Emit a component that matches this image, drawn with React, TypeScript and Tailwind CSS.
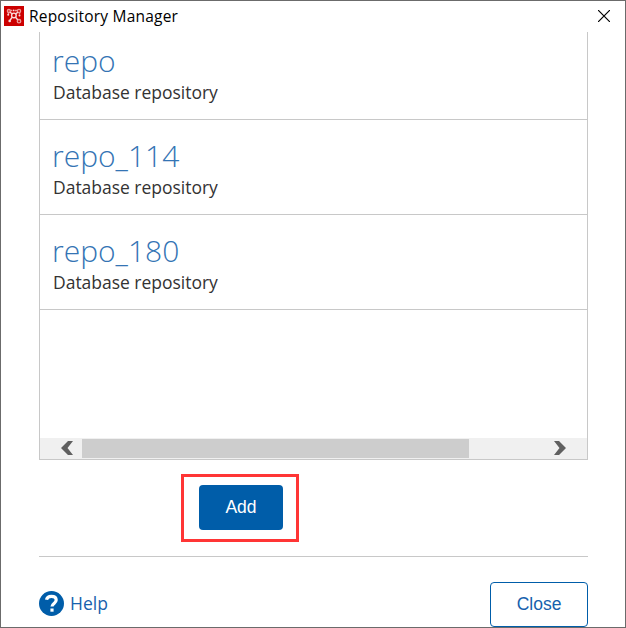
const repositories = ["repo", "repo_114", "repo_180"];

function AppIcon() {
  return (
    <svg width="20" height="20" viewBox="0 0 20 20" className="mb-px shrink-0">
      <rect width="20" height="20" fill="#cc0000" />
      <g fill="none" stroke="#ee9a9a" strokeWidth="1.4">
        <circle cx="4.900" cy="5" r="1.500" />
        <circle cx="15" cy="5" r="1.600" />
        <circle cx="15" cy="15.200" r="1.700" />
        <path d="M6.500 4.500h1.800M11 4.500h2.200M15.500 6.600v2M4.500 6.600v1.600" />
      </g>
      <g fill="none" stroke="#fadcdc" strokeWidth="1.400">
        <circle cx="9.900" cy="9.400" r="2.300" />
        <path d="M6 6.200l2.200 1.600M13.900 6.200l-2.300 1.700M11.500 11.200l2.200 2.500M8.200 11.200l-2 2.800" />
      </g>
      <g fill="#fbdada">
        <circle cx="5.700" cy="14.900" r="1.300" />
        <circle cx="15.500" cy="9.400" r="1" />
        <circle cx="4.200" cy="8.800" r="1" />
        <circle cx="9.700" cy="4.400" r="0.900" />
      </g>
    </svg>
  );
}

function TitleBar() {
  return (
    <header className="flex h-[31px] shrink-0 items-center pl-[3px] pr-[15px]">
      <AppIcon />
      <h1 className="mb-px ml-[5px] grow whitespace-nowrap font-['Open_Sans',sans-serif] text-[15.5px] leading-5 tracking-[0.2px] text-black">
        Repository Manager
      </h1>
      <svg width="12" height="12" viewBox="0 0 12 12" stroke="#000" strokeWidth="1.2" className="mb-px">
        <path d="M0 0L12 12M12 0L0 12" />
      </svg>
    </header>
  );
}

function RepositoryRow({ name }: { name: string }) {
  return (
    <li className="flex h-[95px] flex-col border-b border-[#c8c8c8] pl-[12px] pt-[19px]">
      <span className="text-[30px] font-light leading-[34px] text-[#3474b4]">{name}</span>
      <span className="ml-px mt-[2px] text-[17.5px] leading-[24px] tracking-[-0.02px] text-[#333]">
        Database repository
      </span>
    </li>
  );
}

function ScrollBar() {
  return (
    <div className="flex h-[21px] items-center bg-[#f0f0f0]">
      <svg width="42" height="20" viewBox="0 0 42 20" className="mb-px shrink-0">
        <path d="M28 3h5l-5.500 7 5.500 7h-5l-7-7z" fill="#606060" />
      </svg>
      <div className="h-[19px] w-[387px] bg-[#cdcdcd]" />
      <svg width="118" height="20" viewBox="0 0 118 20" className="mb-px shrink-0">
        <path d="M85 3h5l7 7-7 7h-5l5.500-7z" fill="#606060" />
      </svg>
    </div>
  );
}

export default function App() {
  return (
    <div className="flex h-[628px] w-[626px] flex-col overflow-hidden border border-[#6b6b6b] bg-white font-['Open_Sans',sans-serif]">
      <TitleBar />
      <main className="ml-[38px] flex w-[549px] flex-col">
        <section className="flex h-[428px] flex-col overflow-hidden border-x border-b border-[#c8c8c8]">
          <ul className="-mt-[7px] grow">
            {repositories.map((name) => (
              <RepositoryRow key={name} name={name} />
            ))}
          </ul>
          <ScrollBar />
        </section>
        <div className="ml-[142px] mt-[14px] flex h-[68px] w-[118px] items-center justify-center border-[3px] border-[#ff3535]">
          <button className="mb-px ml-[2px] h-[45px] w-[84px] rounded-[4px] bg-[#005da9] font-['Liberation_Sans',sans-serif] text-[17.5px] text-white">
            Add
          </button>
        </div>
        <hr className="mt-[14px] border-[#c8c8c8]" />
        <footer className="mt-[25px] flex items-start justify-between">
          <a className="mt-[9px] flex items-start gap-[6px] text-[17.5px] leading-[24px] text-[#1761ad]">
            <svg width="25" height="25" viewBox="0 0 25 25">
              <circle cx="12.500" cy="12.500" r="12.500" fill="#005da9" />
              <path d="M7.500 8.800C8 6.200 9.900 5.300 12.400 5.300c3 0 4.800 1.600 4.800 3.800 0 3.300-4.200 3.400-4.200 6.500" fill="none" stroke="#fff" strokeWidth="3.200" />
              <path d="M11.400 17.500h3.200v3.200h-3.200z" fill="#fff" />
            </svg>
            <span>Help</span>
          </a>
          <button className="h-[45px] w-[98px] rounded-[4px] border border-[#005da9] font-['Liberation_Sans',sans-serif] text-[17.5px] text-[#1761ad]">
            Close
          </button>
        </footer>
      </main>
    </div>
  );
}
